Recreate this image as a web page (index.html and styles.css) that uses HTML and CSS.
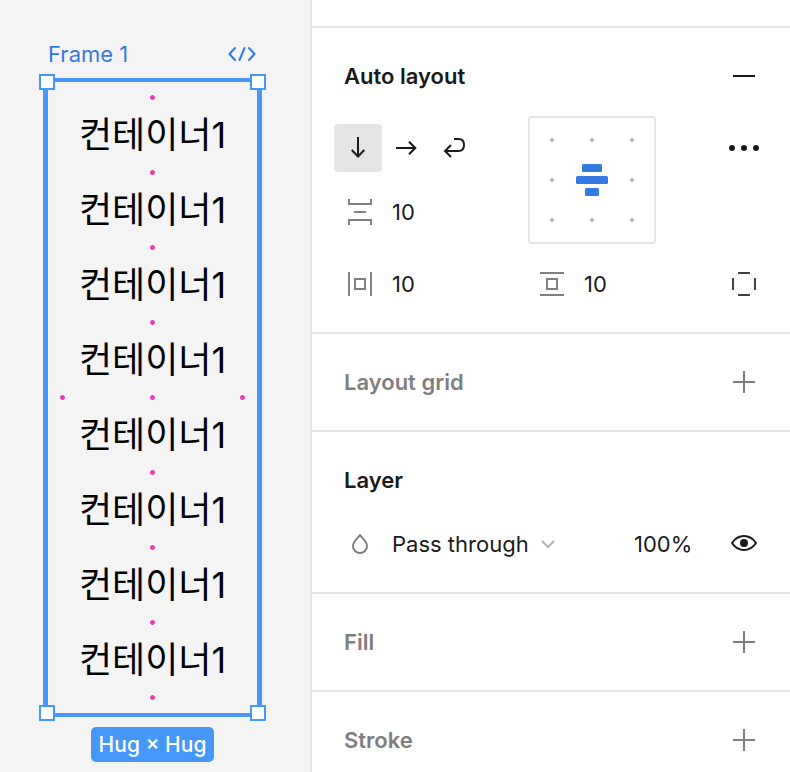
FILE: index.html
```html
<!DOCTYPE html>
<html lang="ko">
<head>
<meta charset="utf-8">
<meta name="viewport" content="width=device-width, initial-scale=1">
<title>Frame 1</title>
<link rel="stylesheet" href="styles.css">
</head>
<body>
<main class="canvas">
  <div class="frame-head">
    <span>Frame 1</span>
    <svg width="28" height="16" viewBox="0 0 28 16" fill="none" stroke="currentColor" stroke-width="2" stroke-linecap="round" stroke-linejoin="round" aria-hidden="true"><path d="M7 2 1.500 8 7 14M16.500 2 11.500 14M21 2 26.500 8 21 14"/></svg>
  </div>
  <div class="frame">
    <i class="handle top left"></i><i class="handle top right"></i>
    <i class="handle bottom left"></i><i class="handle bottom right"></i>
    <div class="gap"><i class="dot"></i></div>
    <p class="item">컨테이너1</p>
    <div class="gap"><i class="dot"></i></div>
    <p class="item">컨테이너1</p>
    <div class="gap"><i class="dot"></i></div>
    <p class="item">컨테이너1</p>
    <div class="gap"><i class="dot"></i></div>
    <p class="item">컨테이너1</p>
    <div class="gap wide"><i class="dot"></i><i class="dot"></i><i class="dot"></i></div>
    <p class="item">컨테이너1</p>
    <div class="gap"><i class="dot"></i></div>
    <p class="item">컨테이너1</p>
    <div class="gap"><i class="dot"></i></div>
    <p class="item">컨테이너1</p>
    <div class="gap"><i class="dot"></i></div>
    <p class="item">컨테이너1</p>
    <div class="gap"><i class="dot"></i></div>
  </div>
  <span class="size-badge">Hug × Hug</span>
</main>

<aside class="panel">
  <section class="section">
    <header class="section-head">
      <h2>Auto layout</h2>
      <button class="icon-button" aria-label="Remove auto layout"><svg width="24" height="24" viewBox="0 0 24 24" stroke="currentColor" stroke-width="2"><path d="M1 12h22"/></svg></button>
    </header>
    <div class="auto-grid">
      <div class="directions">
        <button class="icon-button active" aria-label="Vertical"><svg width="24" height="24" viewBox="0 0 24 24" fill="none" stroke="currentColor" stroke-width="2"><path d="M12 1v20M5.700 14l6.300 6.500 6.300-6.500"/></svg></button>
        <button class="icon-button" aria-label="Horizontal"><svg width="24" height="24" viewBox="0 0 24 24" fill="none" stroke="currentColor" stroke-width="2"><path d="M2 12h19M15 5.700l6.300 6.300-6.300 6.300"/></svg></button>
        <button class="icon-button" aria-label="Wrap"><svg width="24" height="24" viewBox="0 0 24 24" fill="none" stroke="currentColor" stroke-width="2"><path d="M12 3h4.500c3.500 0 5.500 2.500 5.500 6s-2 6-5.500 6H3M9 9l-6 6 6 6"/></svg></button>
      </div>
      <div class="align-box">
        <i></i><i></i><i></i><i></i>
        <svg width="32" height="32" viewBox="0 0 32 32" fill="currentColor" aria-hidden="true"><rect x="6" width="20" height="8" rx="1.500"/><rect y="12" width="32" height="8" rx="1.500"/><rect x="9" y="24" width="14" height="8" rx="1.500"/></svg>
        <i></i><i></i><i></i><i></i>
      </div>
      <button class="icon-button more" aria-label="More options"><svg width="32" height="8" viewBox="0 0 32 8" fill="currentColor"><circle cx="4" cy="4" r="3"/><circle cx="16" cy="4" r="3"/><circle cx="28" cy="4" r="3"/></svg></button>
      <label class="field spacing" aria-label="Vertical gap">
        <svg width="24" height="26" viewBox="0 0 24 26" fill="none" stroke="currentColor" stroke-width="2"><path d="M1 0v5h22V0M6 13h12M1 26v-5h22v5"/></svg>
        <input type="text" value="10">
      </label>
      <label class="field first" aria-label="Horizontal padding">
        <svg width="24" height="24" viewBox="0 0 24 24" fill="none" stroke="currentColor" stroke-width="2"><path d="M1 0v24M23 0v24M7 7h10v10H7z"/></svg>
        <input type="text" value="10">
      </label>
      <label class="field second" aria-label="Vertical padding">
        <svg width="24" height="24" viewBox="0 0 24 24" fill="none" stroke="currentColor" stroke-width="2"><path d="M0 1h24M0 23h24M7 7h10v10H7z"/></svg>
        <input type="text" value="10">
      </label>
      <button class="icon-button soft" aria-label="Individual padding"><svg width="24" height="24" viewBox="0 0 24 24" fill="none" stroke="currentColor" stroke-width="2"><path d="M6 1h12M6 23h12M1 6v12M23 6v12"/></svg></button>
    </div>
  </section>

  <section class="section">
    <header class="section-head empty">
      <h2>Layout grid</h2>
      <button class="icon-button" aria-label="Add layout grid"><svg width="24" height="24" viewBox="0 0 24 24" stroke="currentColor" stroke-width="2"><path d="M1 12h22M12 1v22"/></svg></button>
    </header>
  </section>

  <section class="section">
    <header class="section-head"><h2>Layer</h2></header>
    <div class="layer-row">
      <label class="field blend" aria-label="Blend mode">
        <svg width="18" height="22" viewBox="0 0 18 22" fill="none" stroke="currentColor" stroke-width="2" stroke-linejoin="round"><path d="M9 2C7.500 4.500 2 8.500 2 13a7 7 0 0 0 14 0C16 8.500 10.500 4.500 9 2z"/></svg>
        <select><option>Pass through</option></select>
        <svg class="chevron" width="14" height="9" viewBox="0 0 14 9" fill="none" stroke="currentColor" stroke-width="2"><path d="M1 1l6 6 6-6"/></svg>
      </label>
      <input class="opacity" type="text" value="100%" aria-label="Opacity">
      <button class="icon-button" aria-label="Toggle visibility"><svg width="26" height="18" viewBox="0 0 26 18" fill="none" stroke="currentColor" stroke-width="2"><path d="M1 8C4 3.500 8 1 13 1s9 2.500 12 7c-3 4.500-7 7-12 7S4 12.500 1 8z" stroke-linejoin="round"/><circle cx="13" cy="8" r="4" fill="currentColor" stroke="none"/></svg></button>
    </div>
  </section>

  <section class="section">
    <header class="section-head empty">
      <h2>Fill</h2>
      <button class="icon-button" aria-label="Add fill"><svg width="24" height="24" viewBox="0 0 24 24" stroke="currentColor" stroke-width="2"><path d="M1 12h22M12 1v22"/></svg></button>
    </header>
  </section>

  <section class="section">
    <header class="section-head empty">
      <h2>Stroke</h2>
      <button class="icon-button" aria-label="Add stroke"><svg width="24" height="24" viewBox="0 0 24 24" stroke="currentColor" stroke-width="2"><path d="M1 12h22M12 1v22"/></svg></button>
    </header>
  </section>
</aside>
</body>
</html>
```

FILE: styles.css
```css
* {
  box-sizing: border-box;
}

body {
  margin: 0;
  display: flex;
  height: 100vh;
  overflow: hidden;
  background: #f4f4f4;
  color: #1a1a1a;
  font: 22px/32px Inter, "Noto Sans CJK KR", sans-serif;
}

button,
input,
select {
  margin: 0;
  padding: 0;
  border: 0;
  background: none;
  color: inherit;
  font: inherit;
}

svg {
  display: block;
  flex: none;
}

/* Canvas */

.canvas {
  flex: 0 0 310px;
  display: flex;
  flex-direction: column;
  align-items: center;
  padding: 38px 48px 0 43px;
}

.frame-head {
  display: flex;
  align-items: center;
  justify-content: space-between;
  align-self: stretch;
  padding: 0 6px 0 5px;
  color: #347ae0;
}

.frame {
  position: relative;
  align-self: stretch;
  display: flex;
  flex-direction: column;
  margin: 8px 0 10px;
  padding: 11px 10px;
  border: 4px solid #4597f8;
  border-width: 4px 5px;
}

.item {
  margin: 0;
  color: #000;
  font-family: Inter, "Noto Sans CJK KR", sans-serif;
  font-size: 36px;
  line-height: 66px;
  text-align: center;
}

.gap {
  display: flex;
  justify-content: center;
}

.gap.wide {
  justify-content: space-between;
}

.dot {
  width: 9px;
  height: 9px;
  border: 1px solid transparent;
  border-radius: 50%;
  background: radial-gradient(circle, #ec3db5 2px, #fff 3px) padding-box;
}

.handle {
  position: absolute;
  width: 16px;
  height: 16px;
  border: 2px solid #4597f8;
  background: #fff;
}

.handle.top { top: -8px; }
.handle.bottom { bottom: -8px; }
.handle.left { left: -9px; }
.handle.right { right: -9px; }

.size-badge {
  padding: 2px 8px 1px;
  border-radius: 5px;
  background: #4597f8;
  color: #fff;
  font-size: 21px;
  font-weight: 500;
}

/* Properties panel */

.panel {
  flex: 1;
  padding-top: 26px;
  border-left: 2px solid #e5e5e5;
  background: #fff;
}

.section {
  border-top: 2px solid #e5e5e5;
}

.section-head {
  display: flex;
  align-items: center;
  justify-content: space-between;
  height: 96px;
  padding: 0 22px 0 32px;
}

.section-head.empty {
  color: #7f7f7f;
}

h2 {
  margin: 0;
  font-size: 22px;
  font-weight: 600;
}

.icon-button {
  display: flex;
  align-items: center;
  justify-content: center;
  width: 48px;
  height: 48px;
  border-radius: 4px;
}

.icon-button.active {
  background: #e5e5e5;
}

.icon-button.soft {
  color: #444;
}

.auto-grid {
  display: grid;
  grid-template-columns: 194px 1fr 48px;
  grid-template-rows: 48px 48px 56px;
  row-gap: 16px;
  padding: 0 22px 24px;
}

.directions {
  display: flex;
}

.align-box {
  grid-area: 1 / 2 / 3 / 3;
  display: grid;
  grid-template-columns: repeat(3, 40px);
  grid-template-rows: repeat(3, 40px);
  place-content: center;
  place-items: center;
  width: 128px;
  height: 128px;
  margin: -8px 0;
  border: 2px solid #e5e5e5;
  border-radius: 4px;
  color: #347ae0;
}

.align-box i {
  width: 4px;
  height: 4px;
  border-radius: 50%;
  background: #b3b3b3;
}

.more {
  grid-area: 1 / 3;
}

.field {
  display: flex;
  align-items: center;
  height: 48px;
  padding-left: 14px;
}

.field.spacing {
  grid-area: 2 / 1;
}

.field.first {
  grid-area: 3 / 1;
  align-self: end;
}

.field.second {
  grid-area: 3 / 2;
  align-self: end;
  padding-left: 12px;
}

.icon-button.soft {
  grid-area: 3 / 3;
  align-self: end;
}

.field > svg {
  color: #7f7f7f;
}

.field input {
  width: 64px;
  margin-left: 20px;
}

.layer-row {
  display: grid;
  grid-template-columns: 1fr 86px 48px;
  grid-template-rows: 32px;
  align-items: center;
  padding: 0 22px 32px;
}

.field.blend {
  padding-left: 17px;
}

select {
  appearance: none;
  margin: 0 12px 0 23px;
}

.field > .chevron {
  color: #b3b3b3;
}

.opacity {
  width: 86px;
}
```
